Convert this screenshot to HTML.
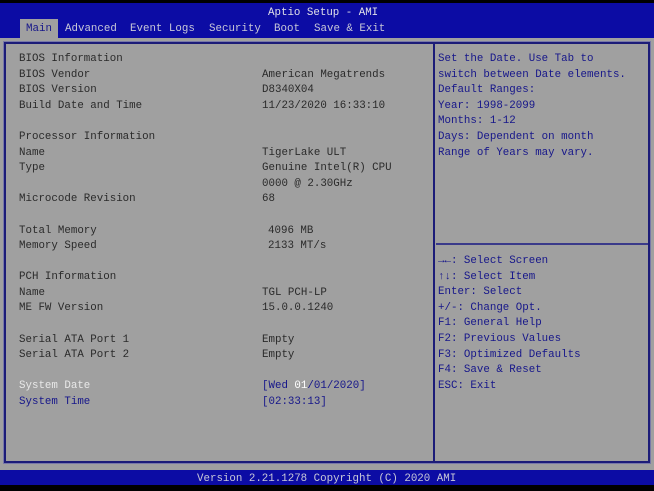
<!DOCTYPE html>
<html><head><meta charset="utf-8"><style>
*{margin:0;padding:0;box-sizing:border-box}
body{width:654px;height:491px;overflow:hidden;background:#000;position:relative;font-family:"Liberation Mono","DejaVu Sans Mono",monospace;font-size:10.8px}
.t{position:absolute;white-space:pre;line-height:14px;margin-top:1px}
#top{position:absolute;left:0;top:3px;width:654px;height:35px;background:#0c0ca4}
#grey{position:absolute;left:0;top:38px;width:654px;height:432px;background:#a0a0a0}
#panel{position:absolute;left:4px;top:42px;width:646px;height:421px;border:2px solid #1c1c78;box-shadow:0 0 0 1px #7878a8}
#div{position:absolute;left:433px;top:42px;width:2px;height:421px;background:#1c1c78}
#hr{position:absolute;left:436px;top:243px;width:212px;height:2px;background:#3a3a8a}
#foot{position:absolute;left:0;top:470px;width:654px;height:15px;background:#0c0ca4}
.k{color:#2a2a2a}
.b{color:#16168a}
.w{color:#e8e8e8}
.tab{color:#c8c8d8}
</style></head><body>
<div id="top"></div>
<div class="t" style="left:268px;top:5px;color:#e0e0e8">Aptio Setup - AMI</div>
<div style="position:absolute;left:20px;top:19px;width:38px;height:19px;background:#a0a0a0"></div>
<div class="t" style="left:26px;top:21px;color:#16168a">Main</div>
<div class="t tab" style="left:65px;top:21px">Advanced</div>
<div class="t tab" style="left:130px;top:21px">Event Logs</div>
<div class="t tab" style="left:209px;top:21px">Security</div>
<div class="t tab" style="left:274px;top:21px">Boot</div>
<div class="t tab" style="left:314px;top:21px">Save &amp; Exit</div>
<div id="grey"></div>
<div id="panel"></div>
<div id="div"></div>
<div id="hr"></div>

<div class="t k" style="left:19px;top:51px">BIOS Information</div>
<div class="t k" style="left:19px;top:67px">BIOS Vendor</div><div class="t k" style="left:262px;top:67px">American Megatrends</div>
<div class="t k" style="left:19px;top:82px">BIOS Version</div><div class="t k" style="left:262px;top:82px">D8340X04</div>
<div class="t k" style="left:19px;top:98px">Build Date and Time</div><div class="t k" style="left:262px;top:98px">11/23/2020 16:33:10</div>
<div class="t k" style="left:19px;top:129px">Processor Information</div>
<div class="t k" style="left:19px;top:145px">Name</div><div class="t k" style="left:262px;top:145px">TigerLake ULT</div>
<div class="t k" style="left:19px;top:160px">Type</div><div class="t k" style="left:262px;top:160px">Genuine Intel(R) CPU</div>
<div class="t k" style="left:262px;top:176px">0000 @ 2.30GHz</div>
<div class="t k" style="left:19px;top:191px">Microcode Revision</div><div class="t k" style="left:262px;top:191px">68</div>
<div class="t k" style="left:19px;top:223px">Total Memory</div><div class="t k" style="left:268px;top:223px">4096 MB</div>
<div class="t k" style="left:19px;top:238px">Memory Speed</div><div class="t k" style="left:268px;top:238px">2133 MT/s</div>
<div class="t k" style="left:19px;top:269px">PCH Information</div>
<div class="t k" style="left:19px;top:285px">Name</div><div class="t k" style="left:262px;top:285px">TGL PCH-LP</div>
<div class="t k" style="left:19px;top:300px">ME FW Version</div><div class="t k" style="left:262px;top:300px">15.0.0.1240</div>
<div class="t k" style="left:19px;top:332px">Serial ATA Port 1</div><div class="t k" style="left:262px;top:332px">Empty</div>
<div class="t k" style="left:19px;top:347px">Serial ATA Port 2</div><div class="t k" style="left:262px;top:347px">Empty</div>
<div class="t w" style="left:19px;top:378px">System Date</div><div class="t b" style="left:262px;top:378px">[Wed <span style="color:#fff">01</span>/01/2020]</div>
<div class="t b" style="left:19px;top:394px">System Time</div><div class="t b" style="left:262px;top:394px">[02:33:13]</div>

<div class="t b" style="left:438px;top:51px;line-height:15.6px">Set the Date. Use Tab to
switch between Date elements.
Default Ranges:
Year: 1998-2099
Months: 1-12
Days: Dependent on month
Range of Years may vary.</div>
<div class="t b" style="left:438px;top:253px;line-height:15.6px"><b>→←</b>: Select Screen
<b>↑↓</b>: Select Item
Enter: Select
+/-: Change Opt.
F1: General Help
F2: Previous Values
F3: Optimized Defaults
F4: Save &amp; Reset
ESC: Exit</div>

<div id="foot"></div>
<div class="t" style="left:197px;top:471px;color:#c8c8d8">Version 2.21.1278 Copyright (C) 2020 AMI</div>
</body></html>
